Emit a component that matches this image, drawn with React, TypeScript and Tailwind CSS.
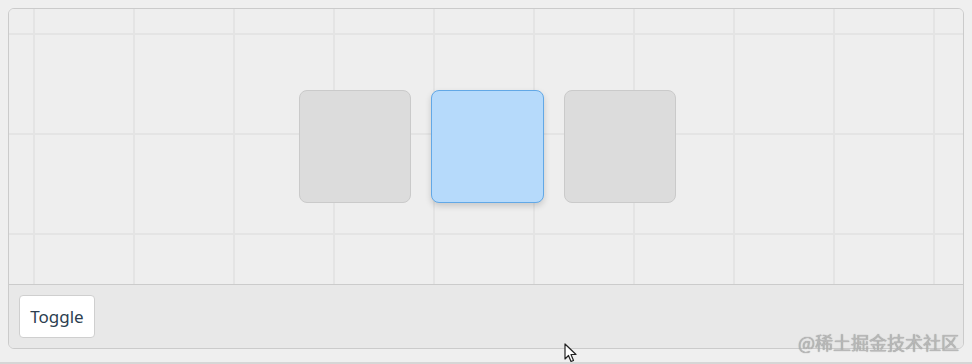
export default function App() {
  return (
    <div
      className="relative h-[364px] w-full overflow-hidden bg-[#efefef] p-2"
      style={{ fontFamily: '"Noto Sans", "Open Sans", sans-serif' }}
    >
      <div className="flex h-[341px] flex-col overflow-hidden rounded-md border border-[#cbcbcb]">
        {/* canvas with grid */}
        <div className="flex h-[275px] items-center justify-center gap-5 bg-[#eeeeee] bg-[linear-gradient(to_right,#e4e4e4_2px,transparent_2px),linear-gradient(to_bottom,#e4e4e4_2px,transparent_2px)] bg-[size:100px_100px] bg-[position:24px_24px] pl-[2px]">
          <div className="h-[113px] w-[112px] rounded-lg border border-[#cacaca] bg-[#dcdcdc]" />
          <div className="h-[113px] w-[113px] rounded-lg border border-[#62a8e6] bg-[#b6dafb] shadow-[0_3px_6px_rgba(0,0,0,0.16)]" />
          <div className="h-[113px] w-[112px] rounded-lg border border-[#cacaca] bg-[#dcdcdc]" />
        </div>
        {/* bottom bar */}
        <div className="flex flex-1 items-center border-t border-[#cbcbcb] bg-[#e8e8e8] px-2.5">
          <button className="h-[43px] w-[76px] rounded border border-[#cfcfcf] bg-white text-[17px] text-[#2c3e50]">
            Toggle
          </button>
        </div>
      </div>
      <div className="absolute bottom-0 left-0 h-[2px] w-full bg-[#d6d6d6]" />
      <div
        className="absolute right-[13px] bottom-[13px] text-[18px] leading-none text-[#b8b8b8] [text-shadow:0_0_1px_#8a8a8a]"
        style={{ fontFamily: '"Noto Sans CJK SC", sans-serif' }}
      >
        @稀土掘金技术社区
      </div>
      <svg className="absolute left-[564px] top-[343px]" width="14" height="21" viewBox="0 0 14 21">
        <path d="M1 1 L1 16 L4.5 12.5 L7 18.5 L9.5 17.5 L7 11.5 L12 11.5 Z" fill="#fff" stroke="#222" strokeWidth="1.2" strokeLinejoin="round" />
      </svg>
    </div>
  )
}
